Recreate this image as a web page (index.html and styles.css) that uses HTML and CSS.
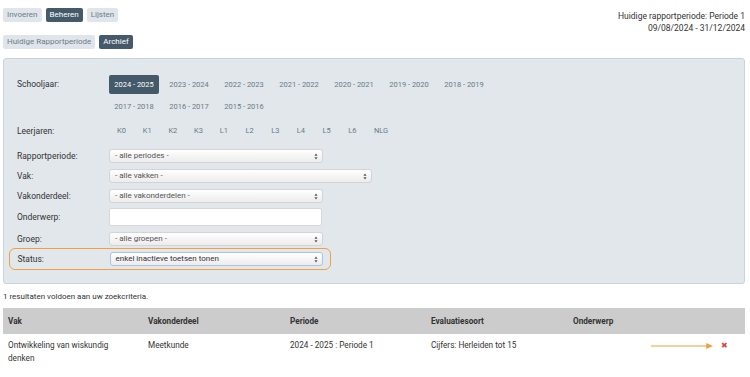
FILE: index.html
```html
<!DOCTYPE html>
<html>
  <head>
    <title>Archief toetsen</title>
    <link rel="stylesheet" href="styles.css">
  </head>
  <body>
    <div class="top">
      <div class="navs">
        <div class="tabs">
          <span class="tab">Invoeren</span>
          <span class="tab active">Beheren</span>
          <span class="tab">Lijsten</span>
        </div>
        <div class="tabs">
          <span class="tab">Huidige Rapportperiode</span>
          <span class="tab active">Archief</span>
        </div>
      </div>
      <div class="period">
        <div>Huidige rapportperiode: Periode 1</div>
        <div>09/08/2024 - 31/12/2024</div>
      </div>
    </div>

    <div class="filters">
      <div class="row row-years">
        <div class="label">Schooljaar:</div>
        <div class="years">
          <span class="year active">2024 - 2025</span>
          <span class="year">2023 - 2024</span>
          <span class="year">2022 - 2023</span>
          <span class="year">2021 - 2022</span>
          <span class="year">2020 - 2021</span>
          <span class="year">2019 - 2020</span>
          <span class="year">2018 - 2019</span>
          <span class="year">2017 - 2018</span>
          <span class="year">2016 - 2017</span>
          <span class="year">2015 - 2016</span>
        </div>
      </div>
      <div class="row row-grades">
        <div class="label">Leerjaren:</div>
        <div class="grades">
          <span>K0</span><span>K1</span><span>K2</span><span>K3</span>
          <span>L1</span><span>L2</span><span>L3</span><span>L4</span>
          <span>L5</span><span>L6</span><span>NLG</span>
        </div>
      </div>
      <div class="row field">
        <div class="label">Rapportperiode:</div>
        <div class="select">- alle periodes -<svg class="arrows" viewBox="0 0 5 9"><path d="M2.5 0.5 L4.5 3.5 H0.5 Z M2.5 8.5 L4.5 5.5 H0.5 Z" fill="#555"/></svg></div>
      </div>
      <div class="row field">
        <div class="label">Vak:</div>
        <div class="select wide">- alle vakken -<svg class="arrows" viewBox="0 0 5 9"><path d="M2.5 0.5 L4.5 3.5 H0.5 Z M2.5 8.5 L4.5 5.5 H0.5 Z" fill="#555"/></svg></div>
      </div>
      <div class="row field">
        <div class="label">Vakonderdeel:</div>
        <div class="select">- alle vakonderdelen -<svg class="arrows" viewBox="0 0 5 9"><path d="M2.5 0.5 L4.5 3.5 H0.5 Z M2.5 8.5 L4.5 5.5 H0.5 Z" fill="#555"/></svg></div>
      </div>
      <div class="row field">
        <div class="label">Onderwerp:</div>
        <div class="input"></div>
      </div>
      <div class="row field">
        <div class="label">Groep:</div>
        <div class="select">- alle groepen -<svg class="arrows" viewBox="0 0 5 9"><path d="M2.5 0.5 L4.5 3.5 H0.5 Z M2.5 8.5 L4.5 5.5 H0.5 Z" fill="#555"/></svg></div>
      </div>
      <div class="row field highlight">
        <div class="label">Status:</div>
        <div class="select focus">enkel inactieve toetsen tonen<svg class="arrows" viewBox="0 0 5 9"><path d="M2.5 0.5 L4.5 3.5 H0.5 Z M2.5 8.5 L4.5 5.5 H0.5 Z" fill="#555"/></svg></div>
      </div>
    </div>

    <p class="count">1 resultaten voldoen aan uw zoekcriteria.</p>

    <table class="results">
      <colgroup>
        <col class="c-vak">
        <col class="c-onderdeel">
        <col class="c-periode">
        <col class="c-soort">
        <col class="c-onderwerp">
        <col>
      </colgroup>
      <thead>
        <tr>
          <th>Vak</th>
          <th>Vakonderdeel</th>
          <th>Periode</th>
          <th>Evaluatiesoort</th>
          <th>Onderwerp</th>
          <th></th>
        </tr>
      </thead>
      <tbody>
        <tr>
          <td>Ontwikkeling van wiskundig<br>denken</td>
          <td>Meetkunde</td>
          <td>2024 - 2025 : Periode 1</td>
          <td>Cijfers: Herleiden tot 15</td>
          <td></td>
          <td class="actions">
            <svg class="pointer" viewBox="0 0 64 6"><path d="M0 3 H58" stroke="#f0a040" stroke-width="1.2"/><path d="M57 0 L64 3 L57 6 Z" fill="#f0a040"/></svg>
            <span class="remove">✖</span>
          </td>
        </tr>
      </tbody>
    </table>
  </body>
</html>
```

FILE: styles.css
```css
body {
  margin: 8px 5px 0 3px;
  font-family: Roboto, "Liberation Sans", sans-serif;
  font-size: 8px;
  color: #444;
  background: white;
}
.top {
  display: flex;
  justify-content: space-between;
}
.tabs {
  display: flex;
  gap: 4px;
  margin-bottom: 13px;
}
.tabs + .tabs {
  margin-bottom: 9px;
}
.tab {
  background: #dfe5ea;
  color: #6c7d89;
  padding: 3px 4px;
  border-radius: 2px;
  line-height: 8px;
}
.tab.active {
  background: #455a69;
  color: white;
}
.period {
  text-align: right;
  color: #333;
  font-size: 8.5px;
  line-height: 12px;
  margin-top: 2px;
}
.filters {
  background: #e1e7eb;
  border: 1px solid #c6d4de;
  border-radius: 3px;
  padding: 16px 0 13px 13px;
}
.row {
  display: flex;
}
.label {
  width: 92px;
  flex-shrink: 0;
  color: #333;
  font-size: 8.5px;
  line-height: 10px;
}
.row-years .label {
  padding-top: 4px;
}
.years {
  display: flex;
  flex-wrap: wrap;
  width: 390px;
  row-gap: 3px;
  column-gap: 5px;
}
.year {
  width: 50px;
  height: 19px;
  line-height: 19px;
  text-align: center;
  color: #697b87;
  font-size: 7.5px;
  border-radius: 2px;
}
.year.active {
  background: #455a69;
  color: white;
}
.row-grades {
  margin-top: 10px;
  margin-bottom: 13px;
}
.grades {
  display: flex;
  padding-left: 8px;
  color: #697b87;
  font-size: 7.5px;
  line-height: 10px;
}
.grades span {
  width: 25.7px;
}
.field {
  align-items: center;
  margin-bottom: 6px;
}
.select {
  position: relative;
  width: 207px;
  height: 12px;
  line-height: 12px;
  padding-left: 5px;
  border: 1px solid #d4d4d4;
  border-radius: 3px;
  background: linear-gradient(#ffffff, #ececec);
  color: #555;
}
.select.wide {
  width: 256px;
}
.select.focus {
  border-color: #a9c4e4;
  color: #333;
}
.arrows {
  position: absolute;
  right: 4px;
  top: 2.5px;
  width: 4px;
  height: 7px;
}
.input {
  width: 211px;
  height: 16px;
  background: white;
  border: 1px solid #d8d8d8;
  border-radius: 2px;
}
.field:has(.input) {
  margin-top: -1px;
}
.highlight {
  margin: -4px 0 0 -8px;
  padding: 3px 7.5px;
  width: 305px;
  border: 1.5px solid #f0a040;
  border-radius: 6px;
}
.count {
  margin: 8px 0 7px 0;
  color: #333;
}
.results {
  width: 100%;
  table-layout: fixed;
  border-collapse: collapse;
  color: #333;
  font-size: 8.2px;
}
.c-vak { width: 140px; }
.c-onderdeel { width: 142px; }
.c-periode { width: 141px; }
.c-soort { width: 142px; }
.c-onderwerp { width: 70px; }
.results th {
  background: #cccccc;
  text-align: left;
  font-weight: bold;
  padding: 8px 5px;
  color: #333;
}
.results td {
  padding: 5px 5px;
  line-height: 13px;
  vertical-align: top;
}
.actions {
  text-align: right;
  white-space: nowrap;
}
.pointer {
  width: 62px;
  height: 6px;
  vertical-align: middle;
}
.remove {
  color: #d9453d;
  margin-left: 6px;
  margin-right: 12px;
}
```
